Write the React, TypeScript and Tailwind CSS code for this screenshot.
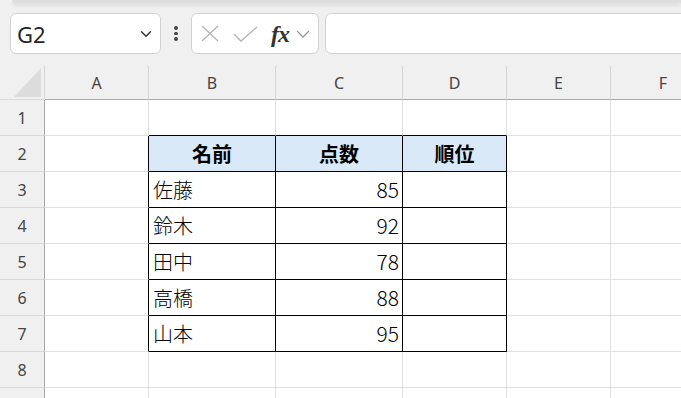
import { ChevronDown } from 'lucide-react';

// 表のデータ
const people = [
    { name: '佐藤', score: 85 },
    { name: '鈴木', score: 92 },
    { name: '田中', score: 78 },
    { name: '高橋', score: 88 },
    { name: '山本', score: 95 },
];

const columns = [
    { key: 'A', w: 'w-[104px]' },
    { key: 'B', w: 'w-[127px]' },
    { key: 'C', w: 'w-[127px]' },
    { key: 'D', w: 'w-[104px]' },
    { key: 'E', w: 'w-[104px]' },
    { key: 'F', w: 'w-[105px]' },
];

const headers = ['名前', '点数', '順位'];

function FormulaBar() {
    return (
        <div className="flex items-center mt-[10px] h-[41px]">
            {/* Name box */}
            <div className="shrink-0 ml-[10px] w-[151px] h-[41px] rounded-[6px] border border-[#d1d1d1] bg-white flex items-center justify-between pl-[6px] pr-[5px]">
                <span className="text-[22px] text-[#262626] leading-none">G2</span>
                <ChevronDown className="w-[18px] h-[18px] text-[#333]" strokeWidth={1.9} />
            </div>

            {/* 三点メニュー */}
            <div className="shrink-0 ml-[13px] w-[4px] flex flex-col gap-[2px]">
                <span className="w-[3.5px] h-[3.5px] rounded-full bg-[#444]" />
                <span className="w-[3.5px] h-[3.5px] rounded-full bg-[#444]" />
                <span className="w-[3.5px] h-[3.5px] rounded-full bg-[#444]" />
            </div>

            {/* Cancel / Enter / fx */}
            <div className="shrink-0 ml-[13px] w-[128px] h-[41px] rounded-[6px] border border-[#d1d1d1] bg-white flex items-center">
                <svg width="18" height="17" viewBox="0 0 18 17" className="ml-[9px]">
                    <path d="M1 1 L17 16 M17 1 L1 16" stroke="#b3b3b3" strokeWidth="1.3" fill="none" />
                </svg>
                <svg width="25" height="16" viewBox="0 0 25 16" className="ml-[14px]">
                    <path d="M1 8 L8 15 L24 1" stroke="#b3b3b3" strokeWidth="1.3" fill="none" />
                </svg>
                <span className="ml-[13px] font-['Liberation_Serif',serif] italic font-semibold text-[24px] text-[#333] leading-none tracking-[-1px]">
                    fx
                </span>
                <svg width="14" height="8" viewBox="0 0 14 8" className="ml-[7px] mt-[1px]">
                    <path d="M1 1 L7 7 L13 1" stroke="#999" strokeWidth="1.3" fill="none" />
                </svg>
            </div>

            {/* 数式入力欄 */}
            <div className="shrink-0 ml-[6px] w-[400px] h-[41px] rounded-l-[6px] border border-[#d1d1d1] bg-white" />
        </div>
    );
}

function ColumnHeader() {
    return (
        <div className="flex mt-[12px] h-[34px]">
            <div className="shrink-0 w-[45px] h-[34px] border-r border-r-[#d5d5d5] border-b border-b-[#d9d9d9]">
                <svg width="44" height="33" viewBox="0 0 44 33">
                    <polygon points="41,2 41,31 14,31" fill="#dcdcdc" />
                </svg>
            </div>
            {columns.map((c) => (
                <div
                    key={c.key}
                    className={`shrink-0 ${c.w} h-[34px] border-r border-r-[#d5d5d5] border-b border-b-[#ababab] flex items-center justify-center text-[16px] text-[#444]`}
                >
                    {c.key}
                </div>
            ))}
        </div>
    );
}

function Cell({ col, row }: { col: number; row: number }) {
    const inTableRow = row >= 2 && row <= 7;
    const inTableCol = col >= 1 && col <= 3;
    const rightBlack = inTableRow && col <= 3;
    const bottomBlack = inTableCol && row >= 1 && row <= 7;
    const fill = inTableCol && row === 2 ? 'bg-[#dae9f8]' : 'bg-white';
    const w = columns[col].w;

    let content: React.ReactNode = null;
    let align = 'justify-start pl-[4px]';
    if (inTableCol && row === 2) {
        content = <span className="font-bold">{headers[col - 1]}</span>;
        align = 'justify-center';
    } else if (inTableCol && row >= 3 && row <= 7) {
        const p = people[row - 3];
        if (col === 1) content = p.name;
        if (col === 2) {
            content = <span className="text-[21px]">{p.score}</span>;
            align = 'justify-end pr-[3px]';
        }
    }

    return (
        <div
            className={`shrink-0 ${w} h-[36px] flex items-center ${align} ${fill} border-r border-b ${rightBlack ? 'border-r-black' : 'border-r-[#e1e1e1]'} ${bottomBlack ? 'border-b-black' : 'border-b-[#e1e1e1]'} text-[20px] text-black font-light font-['Noto_Sans_CJK_JP',sans-serif] leading-none`}
        >
            {content}
        </div>
    );
}

export default function App() {
    const rows = [1, 2, 3, 4, 5, 6, 7, 8, 9];
    return (
        <div className="w-[681px] h-[398px] overflow-hidden bg-[#f0f0f0] font-['Noto_Sans',sans-serif]">
            {/* 上部リボンの影 */}
            <div className="ml-[12px] h-[3px] rounded-bl-[6px] bg-[#dedede] shadow-[0_2px_4px_rgba(0,0,0,0.12)]" />

            <FormulaBar />
            <ColumnHeader />

            {rows.map((r) => (
                <div key={r} className="flex">
                    <div className="shrink-0 w-[45px] h-[36px] border-r border-r-[#ababab] border-b border-b-[#d9d9d9] bg-[#f0f0f0] flex items-center justify-center text-[16px] text-[#444]">
                        {/* 9行目は画面外なので番号は出さない */}
                        {r < 9 ? r : null}
                    </div>
                    {columns.map((c, i) => (
                        <Cell key={c.key} col={i} row={r} />
                    ))}
                </div>
            ))}
        </div>
    );
}
